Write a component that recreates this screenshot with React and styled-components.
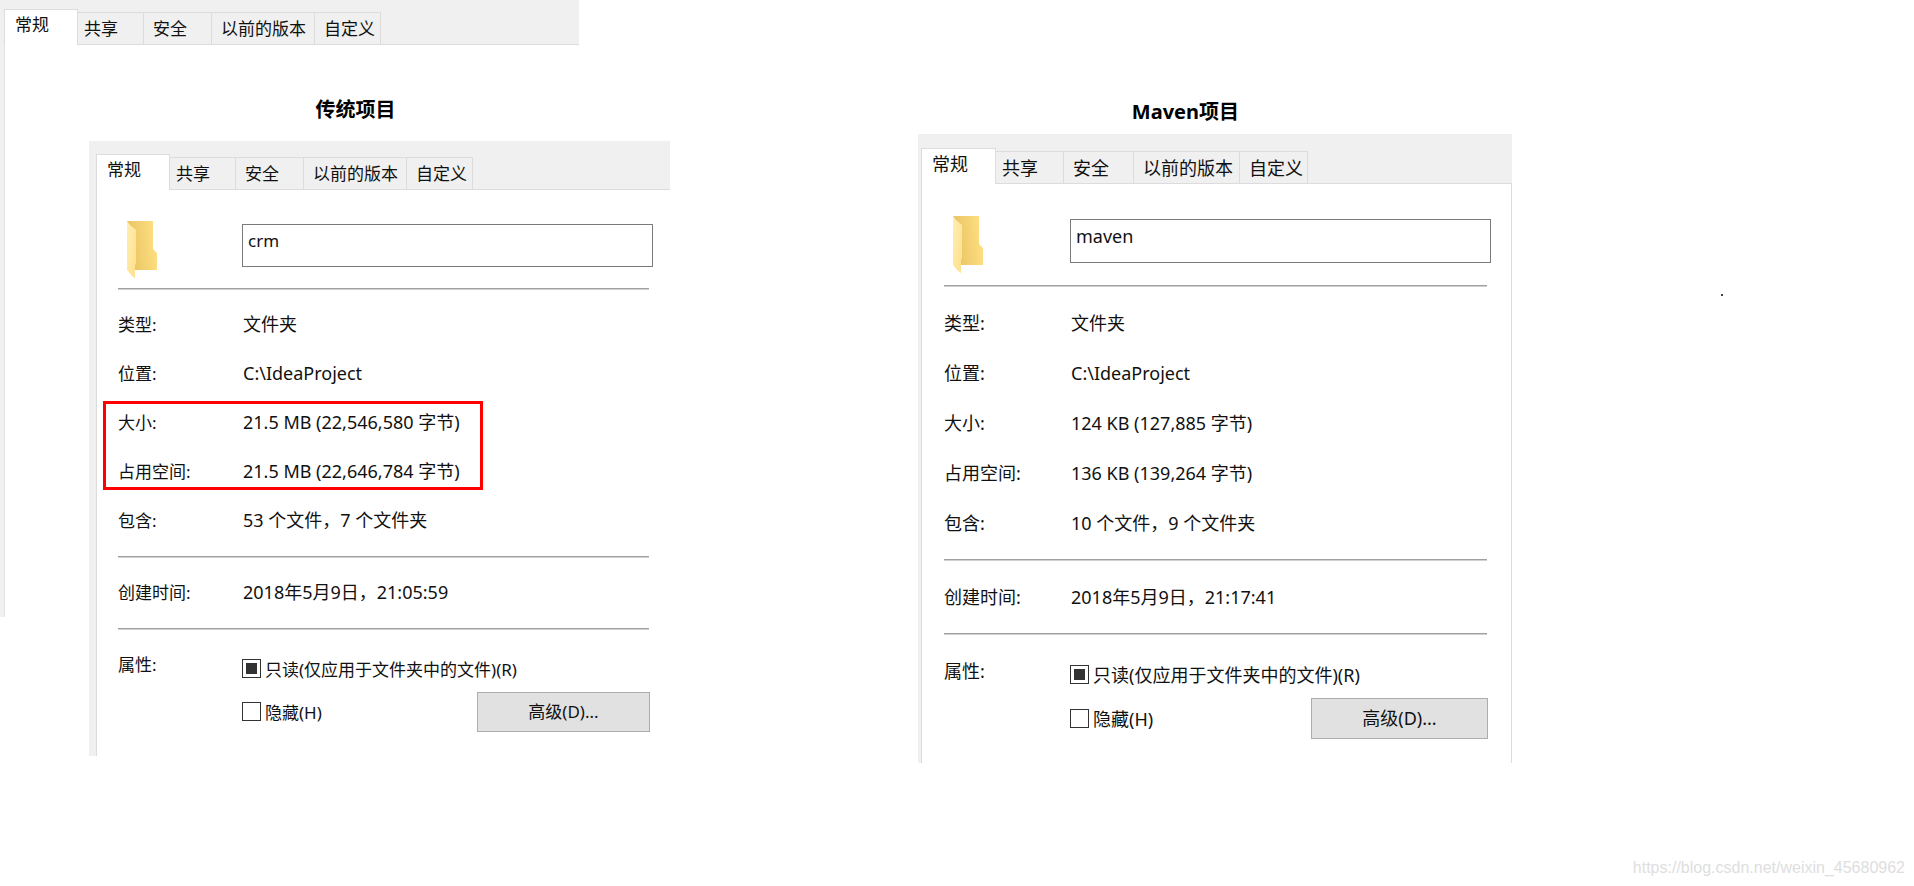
import React, { useEffect, useId, useRef } from 'react';
import styled, { createGlobalStyle, css, ThemeProvider } from 'styled-components';

const GlobalStyle = createGlobalStyle`
  *, *::before, *::after { box-sizing: border-box; }
  body {
    margin: 0;
    background: #fff;
    color: #111;
    font-family: "Noto Sans", "Noto Sans CJK SC", sans-serif;
    font-size: 17px;
  }
`;

const regular = {
  font: 17,
  tabs: [74, 66, 68, 103, 66],
  top: 13,
  rail: 7,
  inset: 21,
  rightInset: 17,
  labelColumn: 124,
  header: 98,
  headerTop: 34,
  field: 43,
  row: 49,
  rowsTop: 10,
  rowsBottom: 11,
  optionsTop: 17,
  option: 43,
  button: 173,
  buttonHeight: 40,
};

const large = {
  font: 18,
  tabs: [75, 68, 70, 106, 68],
  top: 14,
  rail: 3,
  inset: 22,
  rightInset: 20,
  labelColumn: 126,
  header: 101,
  headerTop: 35,
  field: 44,
  row: 50,
  rowsTop: 11,
  rowsBottom: 11,
  optionsTop: 17,
  option: 44,
  button: 177,
  buttonHeight: 41,
};

const Page = styled.div`
  position: relative;
  display: flex;
  flex-direction: column;
  min-height: 100vh;
`;

const Backdrop = styled.div`
  position: absolute;
  top: 0;
  left: 0;
  width: 30.25%;
  padding: 9px 0 0 4px;
  background: #f0f0f0;
`;

const BackdropBody = styled.div`
  height: 572px;
  border-left: 1px solid #e3e3e3;
  background: #fff;
`;

const Columns = styled.main`
  position: relative;
  display: grid;
  grid-template-columns:
    minmax(0, 581fr) minmax(0, 248fr) minmax(0, 594fr) minmax(0, 402fr);
  padding-left: 4.65%;
`;

const Column = styled.section`
  grid-column: ${(p) => p.$column};
  padding-top: ${(p) => p.$top}px;
`;

const Title = styled.h2`
  margin: 0 0 ${(p) => p.$gap}px;
  padding-left: ${(p) => p.$indent}%;
  color: #000;
  font-size: 20px;
  font-weight: 700;
  line-height: 24px;
`;

const Panel = styled.div`
  padding: ${(p) => p.theme.top}px 0 0 ${(p) => p.theme.rail}px;
  background: #f0f0f0;
  font-size: ${(p) => p.theme.font}px;
`;

const TabList = styled.div`
  display: flex;
  align-items: flex-end;
  height: 36px;

  &::after {
    content: "";
    flex: 1;
    border-bottom: 1px solid #dcdcdc;
  }
`;

const Tab = styled.button`
  flex: none;
  width: ${(p) => p.$width}px;
  height: 33px;
  margin: 0;
  padding: 0 0 0 9px;
  border: solid #dcdcdc;
  border-width: 1px 1px 1px 0;
  background: #f0f0f0;
  color: #111;
  font: inherit;
  line-height: 30px;
  text-align: left;
  white-space: nowrap;

  &:nth-child(2) { padding-left: 6px; }

  ${(p) => p.$active && css`
    height: 36px;
    padding: 0 0 5px 10px;
    border-width: 1px 1px 0 1px;
    background: #fff;
  `}
`;

const Body = styled.div`
  padding: 0 ${(p) => p.theme.rightInset}px 23px ${(p) => p.theme.inset}px;
  border-left: 1px solid #dcdcdc;
  border-right: ${(p) => (p.$closed ? '1px solid #dcdcdc' : 'none')};
  background: #fff;
`;

const Header = styled.div`
  display: grid;
  grid-template-columns: ${(p) => p.theme.labelColumn}px 1fr;
  align-items: start;
  height: ${(p) => p.theme.header}px;
  padding-top: ${(p) => p.theme.headerTop}px;
`;

const FolderIcon = styled.svg`
  display: block;
  margin: -3px 0 0 9px;
`;

const NameInput = styled.input`
  width: 100%;
  height: ${(p) => p.theme.field}px;
  padding: 0 5px 10px;
  border: 1px solid #7a7a7a;
  outline: none;
  background: #fff;
  color: #111;
  font: inherit;
`;

const Divider = styled.hr`
  height: 2px;
  margin: 0 4px 0 0;
  border: 0;
  border-top: 1px solid #a0a0a0;
  background: #d0d0d0;
`;

const Details = styled.dl`
  margin: 0;
  padding: ${(p) => p.theme.rowsTop}px 0 ${(p) => p.theme.rowsBottom}px;
`;

const Marked = styled.div`
  position: relative;

  ${(p) => p.$on && css`
    &::after {
      content: "";
      position: absolute;
      top: 3px;
      left: -15px;
      width: 380px;
      height: 89px;
      border: 3px solid #fe0000;
      pointer-events: none;
    }
  `}
`;

const Row = styled.div`
  display: grid;
  grid-template-columns: ${(p) => p.theme.labelColumn}px 1fr;
  line-height: ${(p) => p.theme.row}px;
  white-space: nowrap;
`;

const Term = styled.dt`
  margin: 0;
`;

const Value = styled.dd`
  margin: 0 0 0 1px;
  font-size: 18px;
`;

const Attributes = styled.div`
  display: grid;
  grid-template-columns: ${(p) => p.theme.labelColumn}px 1fr;
`;

const AttributesLabel = styled.div`
  padding-top: ${(p) => p.theme.rowsTop}px;
  line-height: ${(p) => p.theme.row}px;
`;

const Options = styled.div`
  padding-top: ${(p) => p.theme.optionsTop}px;
`;

const OptionLine = styled.div`
  display: flex;
  align-items: center;
  justify-content: space-between;
  height: ${(p) => p.theme.option}px;
`;

const CheckLabel = styled.label`
  display: flex;
  align-items: center;
  gap: 4px;
  white-space: nowrap;
`;

const CheckInput = styled.input`
  display: grid;
  place-items: center;
  flex: none;
  width: 19px;
  height: 19px;
  margin: 0;
  border: 1px solid #333;
  appearance: none;
  background: #fff;

  &:indeterminate::before {
    content: "";
    width: 11px;
    height: 11px;
    background: #333;
  }
`;

const AdvancedButton = styled.button`
  width: ${(p) => p.theme.button}px;
  height: ${(p) => p.theme.buttonHeight}px;
  margin-right: 3px;
  padding: 0 0 2px;
  border: 1px solid #adadad;
  background: #e1e1e1;
  color: #111;
  font: inherit;
`;

const Speck = styled.div`
  grid-column: 4;
  width: 2px;
  height: 2px;
  margin: 294px 0 0 52%;
  background: #444;
`;

const Footer = styled.footer`
  margin-top: auto;
  padding: 0 9px 8px 0;
  color: #dedede;
  font-family: "Liberation Sans", sans-serif;
  font-size: 16px;
  line-height: 20px;
  text-align: right;
`;

const tabNames = ['常规', '共享', '安全', '以前的版本', '自定义'];

function Tabs({ widths }) {
  return (
    <TabList role="tablist">
      {tabNames.map((name, i) => (
        <Tab
          key={name}
          type="button"
          role="tab"
          aria-selected={i === 0}
          $active={i === 0}
          $width={widths[i]}
        >
          {name}
        </Tab>
      ))}
    </TabList>
  );
}

function Folder() {
  const id = useId();
  return (
    <FolderIcon width="32" height="59" viewBox="0 0 32 59" aria-hidden="true">
      <defs>
        <linearGradient id={`${id}b`} x1="0" x2="1" y1="0.6" y2="0.4">
          <stop offset="0.2" stopColor="#ecc766" />
          <stop offset="1" stopColor="#ffe083" />
        </linearGradient>
        <linearGradient id={`${id}f`} x1="0" x2="1" y1="0" y2="1">
          <stop offset="0" stopColor="#ffeeb4" />
          <stop offset="1" stopColor="#ffe08a" />
        </linearGradient>
      </defs>
      <path d="M0 0H26V28L30 32V49H0Z" fill={`url(#${id}b)`} />
      <path d="M0 0L3 4L9 9V42L8 44V57L5 55L0 49Z" fill={`url(#${id}f)`} />
    </FolderIcon>
  );
}

function Checkbox({ label, mixed = false }) {
  const ref = useRef(null);
  useEffect(() => {
    ref.current.indeterminate = mixed;
  }, [mixed]);
  return (
    <CheckLabel>
      <CheckInput type="checkbox" ref={ref} />
      {label}
    </CheckLabel>
  );
}

function DetailRow({ term, value }) {
  return (
    <Row>
      <Term>{term}</Term>
      <Value>{value}</Value>
    </Row>
  );
}

function Properties({ theme, name, size, disk, contains, created, marked, closed }) {
  return (
    <ThemeProvider theme={theme}>
      <Panel>
        <Tabs widths={theme.tabs} />
        <Body $closed={closed}>
          <Header>
            <Folder />
            <NameInput aria-label="名称" defaultValue={name} />
          </Header>
          <Divider />
          <Details>
            <DetailRow term="类型:" value="文件夹" />
            <DetailRow term="位置:" value="C:\IdeaProject" />
            <Marked $on={marked}>
              <DetailRow term="大小:" value={size} />
              <DetailRow term="占用空间:" value={disk} />
            </Marked>
            <DetailRow term="包含:" value={contains} />
          </Details>
          <Divider />
          <Details>
            <DetailRow term="创建时间:" value={created} />
          </Details>
          <Divider />
          <Attributes>
            <AttributesLabel>属性:</AttributesLabel>
            <Options>
              <OptionLine>
                <Checkbox label="只读(仅应用于文件夹中的文件)(R)" mixed />
              </OptionLine>
              <OptionLine>
                <Checkbox label="隐藏(H)" />
                <AdvancedButton type="button">高级(D)...</AdvancedButton>
              </OptionLine>
            </Options>
          </Attributes>
        </Body>
      </Panel>
    </ThemeProvider>
  );
}

export default function App() {
  return (
    <Page>
      <GlobalStyle />
      <Backdrop>
        <Tabs widths={regular.tabs} />
        <BackdropBody />
      </Backdrop>
      <Columns>
        <Column $column={1} $top={98}>
          <Title $gap={19} $indent={39}>传统项目</Title>
          <Properties
            theme={regular}
            name="crm"
            size="21.5 MB (22,546,580 字节)"
            disk="21.5 MB (22,646,784 字节)"
            contains="53 个文件，7 个文件夹"
            created="2018年5月9日，21:05:59"
            marked
          />
        </Column>
        <Column $column={3} $top={100}>
          <Title $gap={10} $indent={36}>Maven项目</Title>
          <Properties
            theme={large}
            name="maven"
            size="124 KB (127,885 字节)"
            disk="136 KB (139,264 字节)"
            contains="10 个文件，9 个文件夹"
            created="2018年5月9日，21:17:41"
            closed
          />
        </Column>
        <Speck />
      </Columns>
      <Footer>https://blog.csdn.net/weixin_45680962</Footer>
    </Page>
  );
}
